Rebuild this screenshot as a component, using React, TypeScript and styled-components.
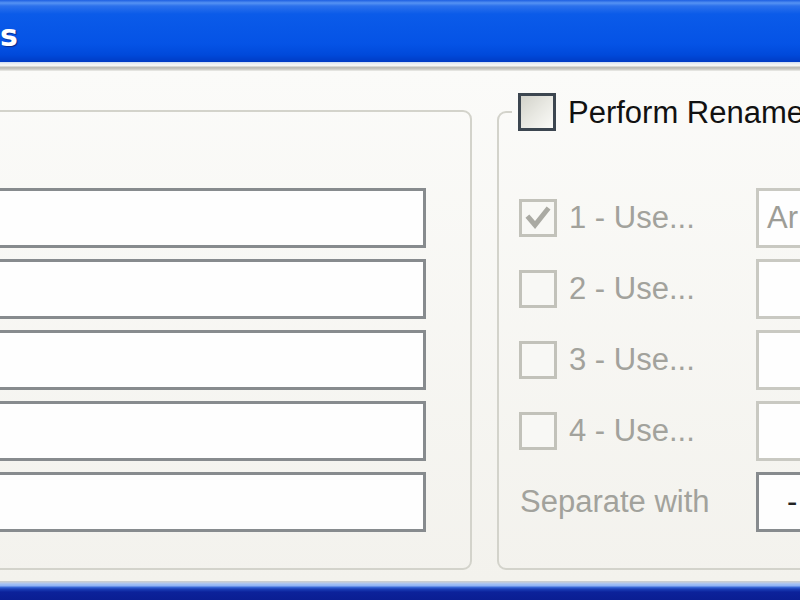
import React from "react";
import styled, { createGlobalStyle } from "styled-components";

const GlobalStyle = createGlobalStyle`
  html, body { margin: 0; padding: 0; background: #f6f5f1; }
  body { font-family: "Liberation Sans", Arial, sans-serif; }
`;

const Window = styled.div`
  width: 800px;
  height: 600px;
  overflow: hidden;
  display: flex;
  flex-direction: column;
  background: #f6f5f1;
`;

const TitleBar = styled.div`
  height: 62px;
  flex-shrink: 0;
  display: flex;
  align-items: center;
  background: linear-gradient(
    180deg,
    #1d5fe2 0px,
    #5693f3 3px,
    #2c71ec 6px,
    #0b5be9 14px,
    #0553e6 44px,
    #0049da 55px,
    #003bc4 62px
  );
`;

const TitleText = styled.span`
  font-family: "DejaVu Sans", "Liberation Sans", sans-serif;
  font-weight: bold;
  font-size: 30px;
  color: #ffffff;
  margin-top: 9px;
  text-shadow: 1px 1px 1px #0a2a8a;
`;

const TitleEdge = styled.div`
  height: 9px;
  flex-shrink: 0;
  background: linear-gradient(
    180deg,
    #c9d8f2 0px,
    #eef1f5 2px,
    #f6f6f4 4px,
    #b9b9b5 5px,
    #c6c6c2 7px,
    #eeeeea 9px
  );
`;

const Body = styled.div`
  flex: 1;
  display: flex;
  align-items: flex-start;
  gap: 25px;
  padding-top: 39px;
  margin-left: -30px;
  background: linear-gradient(180deg, #fbfbf9 0%, #f3f2ed 100%);
`;

const GroupBox = styled.fieldset<{ $width: number }>`
  box-sizing: border-box;
  flex-shrink: 0;
  width: ${(p) => p.$width}px;
  margin: 0;
  border: 2px solid #d3d3cb;
  border-radius: 9px;
  min-width: 0;
`;

const LeftGroup = styled(GroupBox)`
  height: 460px;
  padding: 76px 44px 0 0;
`;

const RightGroup = styled(GroupBox)`
  height: 479px;
  margin-top: -19px;
  padding: 56px 0 0 20px;
`;

const Legend = styled.legend`
  display: flex;
  align-items: center;
  gap: 12px;
  padding: 0 6px;
  margin-left: -7px;
  font-size: 31px;
  line-height: 38px;
  color: #111;
`;

const LegendText = styled.span`
  margin-top: 3px;
`;

const InputStack = styled.div`
  display: flex;
  flex-direction: column;
  gap: 11px;
`;

const TextBox = styled.div<{ $tone: "enabled" | "disabled"; $indent?: number }>`
  box-sizing: border-box;
  height: 60px;
  background: #fefefe;
  border: 3px solid ${(p) => (p.$tone === "enabled" ? "#878b8e" : "#c9c9c2")};
  display: flex;
  align-items: center;
  padding-left: ${(p) => p.$indent ?? 8}px;
  font-size: 31px;
  color: ${(p) => (p.$tone === "enabled" ? "#222" : "#9d9d97")};
  white-space: nowrap;
  overflow: hidden;
`;

const Rows = styled.div`
  display: grid;
  grid-template-columns: 237px 120px;
  grid-auto-rows: 60px;
  row-gap: 11px;
  align-items: center;
`;

const CheckLabel = styled.div`
  display: flex;
  align-items: center;
  gap: 12px;
  font-size: 31px;
  color: #a2a29c;
  white-space: nowrap;
`;

const PlainLabel = styled.div`
  padding-left: 1px;
  font-size: 31px;
  color: #a2a29c;
  white-space: nowrap;
`;

const Box = styled.span<{ $enabled?: boolean }>`
  box-sizing: border-box;
  width: 38px;
  height: 38px;
  flex-shrink: 0;
  display: inline-flex;
  align-items: center;
  justify-content: center;
  border: 3px solid ${(p) => (p.$enabled ? "#3c4650" : "#c2c2ba")};
  background: ${(p) =>
    p.$enabled
      ? "linear-gradient(135deg, #d2d2ca 0%, #e8e8e2 50%, #fbfbf8 100%)"
      : "#f8f8f5"};
`;

const Check = () => (
  <svg width="26" height="26" viewBox="0 0 26 26">
    <polyline
      points="4,13 10,20 22,5"
      fill="none"
      stroke="#aaaaa3"
      strokeWidth="5"
      strokeLinecap="square"
    />
  </svg>
);

const Checkbox: React.FC<{ checked?: boolean; enabled?: boolean }> = ({
  checked,
  enabled,
}) => <Box $enabled={enabled}>{checked ? <Check /> : null}</Box>;

const uses = [
  { label: "1 - Use...", checked: true, value: "Ar" },
  { label: "2 - Use...", checked: false, value: "" },
  { label: "3 - Use...", checked: false, value: "" },
  { label: "4 - Use...", checked: false, value: "" },
];

const BottomFrame = styled.div`
  height: 19px;
  flex-shrink: 0;
  background: linear-gradient(
    180deg,
    #cfcfca 0px,
    #b8c8e6 2px,
    #a2c0f6 3px,
    #8eb0f2 5px,
    #3e6edc 6px,
    #1a3fb8 8px,
    #0c229a 11px,
    #0a1e92 19px
  );
`;

export default function App() {
  return (
    <>
      <GlobalStyle />
      <Window>
        <TitleBar>
          <TitleText>s</TitleText>
        </TitleBar>
        <TitleEdge />
        <Body>
          <LeftGroup $width={502}>
            <InputStack>
              {[0, 1, 2, 3, 4].map((i) => (
                <TextBox key={i} $tone="enabled" />
              ))}
            </InputStack>
          </LeftGroup>
          <RightGroup $width={420}>
            <Legend>
              <Checkbox enabled />
              <LegendText>Perform Rename</LegendText>
            </Legend>
            <Rows>
              {uses.map((u) => (
                <React.Fragment key={u.label}>
                  <CheckLabel>
                    <Checkbox checked={u.checked} />
                    <span>{u.label}</span>
                  </CheckLabel>
                  <TextBox $tone="disabled">{u.value}</TextBox>
                </React.Fragment>
              ))}
              <PlainLabel>Separate with</PlainLabel>
              <TextBox $tone="enabled" $indent={28}>
                -
              </TextBox>
            </Rows>
          </RightGroup>
        </Body>
        <BottomFrame />
      </Window>
    </>
  );
}
